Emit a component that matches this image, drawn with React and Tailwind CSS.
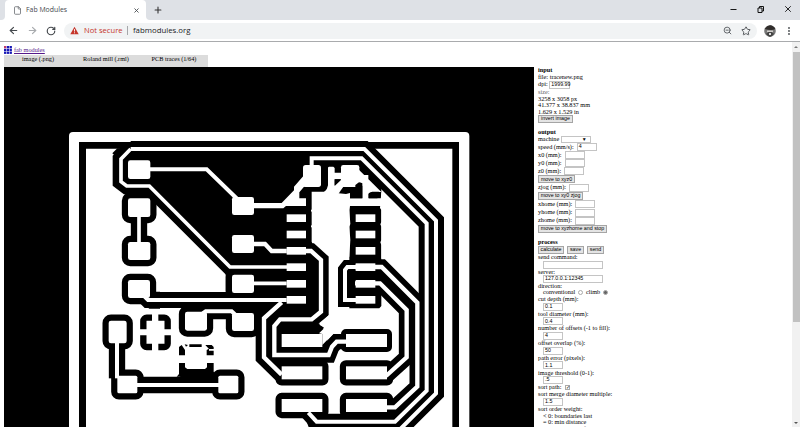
import React from "react";
import { ArrowLeft, ArrowRight, RotateCw, Star, ZoomOut, File, X, Plus, Minus } from "lucide-react";

// Traces: [origin x, origin y, path, copper width, clearance width]
const traces = [
  [540, 0, "M-328 87H373L588 302V820L440 968", 12, 48],
  [540, 0, "M215 145V115H365L560 310V812L465 905H230L205 878", 12, 48],
  [540, 0, "M345 441H425L532 548V800L465 862H435", 13, 47],
  [540, 0, "M345 490H420L500 570V712L438 768", 13, 47],
  [540, 0, "M345 441H322L315 450V540H350", 12, 42],
  [540, 0, "M140 393H213L243 420V575L215 598H120L103 618V705H266L276 680L290 665H322", 13, 46],
  [540, 0, "M-292 524L-276 540H140", 12, 48],
  [540, 0, "M125 547L72 595V712L125 764", 13, 50],
  [0, 0, "M212 87L183 117V185L200 198H268L510 441H690", 11, 50],
  [540, 0, "M30 490H140", 11, 40],
  [540, 0, "M40 372H75L95 393H140", 13, 40],
  [0, 0, "M265 148H440L535 240", 12, 40],
  [0, 0, "M237 285V370", 11, 49],
  [0, 450, "M171 215V325", 12, 49],
  [0, 450, "M225 345H480", 12, 50],
  [0, 450, "M428 130L437 124H515L530 138", 12, 48],
];

// Pads: [x, y, width, height, corner radius]
const pads = [
  [204, 121, 67, 56, 7], [204, 235, 67, 56, 7], [204, 366, 67, 54, 7],
  [516, 231, 66, 54, 7], [516, 345, 66, 54, 7],
  [204, 480, 66, 54, 7], [516, 464, 66, 55, 7],
  [375, 575, 66, 57, 7], [516, 579, 66, 54, 7],
  [146, 602, 54, 68, 7], [172, 767, 60, 53, 5], [475, 767, 60, 53, 5],
  [665, 642, 122, 39, 0], [858, 642, 123, 39, 0],
  [665, 739, 122, 39, 0], [858, 739, 123, 39, 0],
  [665, 837, 122, 39, 0], [858, 837, 123, 39, 0],
];

const pinRows = [283, 332, 381, 430, 480, 528];

function Board() {
  return (
    <svg className="block h-[360px] w-[530px] shrink-0" viewBox="4 67 530 360">
      <rect x="4" y="67" width="530" height="360" fill="#000" />
      <g transform="translate(60 120) scale(.333333)">
        <rect x="27" y="36" width="1201" height="1000" rx="12" fill="#fff" />
        <path d="M57 1000V66H1197V1000H1177V86H78V1000Z" fill="#000" />
        <g fill="none" stroke="#000">
          {traces.map(([x, y, d, , w], i) => (
            <path key={i} d={d} transform={`translate(${x} ${y})`} strokeWidth={w} />
          ))}
        </g>
        <g stroke="#000" strokeWidth="38" strokeLinejoin="round">
          {pads.map(([x, y, w, h, r], i) => (
            <rect key={i} x={x} y={y} width={w} height={h} rx={r} strokeWidth={x > 600 && y < 700 ? 30 : 37} />
          ))}
        </g>
        {/* filled clearance areas */}
        <g fill="#000">
          <path d="M212 87H910L964 206V558L958 565H868V215H755V365L780 420V575L757 598H660L625 600L610 585H497V430L268 198H190V117Z" />
          <path d="M663 547L738 540L780 540L780 577L755 600H660L612 610Z" />
          <path d="M582 550H640L615 590L600 640H582Z" />
          <path d="M658 610H777L792 623L777 642H650Z" />
          <path d="M375 753H450L476 772V800H360V770Z" />
          <path d="M187 715L190 752H238L250 765V775H180L151 770L147 700Z" />
          <path d="M740 905H1015L1100 860L1030 960H760Z" />
          <path d="M157 100L172 85H230L190 130Z" />
          <path d="M250 515H300V566H268L250 552Z" />
        </g>
        {/* ground pour between the pin columns */}
        <g transform="translate(540 0)" fill="#fff">
          <path d="M216 365V225Q216 221 222 221H238Q260 218 264 196V144Q264 140 268 140H280L284 144V158H303V178H284V198L303 180H325L296 220H312L322 215L330 218V258L328 270L331 312L328 320L331 360L328 410L300 425L285 440H275L266 400L240 378L222 366Z" />
          <path d="M213 268L218 272L213 276ZM213 315L218 319L213 323Z" />
          <path d="M330 235H424V258H330ZM367 165H385V240H367ZM355 148L378 170L424 216H395L385 221L367 190L355 185Z" />
          <path d="M424 216L436 228V414L424 416V375L421 367L424 360V320L421 313L424 306V270L420 264Z" />
          <rect x="303" y="135" width="55" height="66" rx="7" />
          <rect x="189" y="135" width="54" height="66" rx="8" />
          <path d="M40 249H125L162 211V200L192 166L205 200H192L178 217V235H198V258H138L130 265H40Z" />
          <path d="M237 640L254 623L238 614L272 580H290L302 629L284 637L247 675V642Z" />
        </g>
        <g fill="#000">
          <path d="M836 220L852 204H886V195L897 187L907 198V235H870V219L858 222Z" />
          <path d="M927 235V219L937 215H956L963 220L952 235Z" />
          <path d="M824 178H842L824 196Z" />
        </g>
        {/* isolated pads split by thermal gaps */}
        <rect x="250" y="593" width="73" height="88" rx="10" fill="none" stroke="#000" strokeWidth="19" />
        <path d="M276 575H295V700H276ZM235 628H340V646H235Z" fill="#fff" />
        <path d="M357 681L365 675L375 690V706H357ZM374 673L384 675L378 680ZM388 673H425V681H388ZM436 675H455L461 681V687H447ZM440 690L447 686V692H461V706H440ZM357 729H375V742L382 747H435L441 742V729H461V755L470 770H350L357 762Z" fill="#000" />
        <g fill="none" stroke="#fff">
          {traces.map(([x, y, d, w], i) => (
            <path key={i} d={d} transform={`translate(${x} ${y})`} strokeWidth={w} />
          ))}
        </g>
        <g fill="#fff">
          {pads.map(([x, y, w, h, r], i) => (
            <rect key={i} x={x} y={y} width={w} height={h} rx={r} />
          ))}
          {pinRows.map((y) => (
            <g key={y}>
              <rect x="680" y={y} width="58" height="23" />
              <rect x="887" y={y} width="59" height="23" />
            </g>
          ))}
        </g>
      </g>
    </svg>
  );
}

function Row({ h = "h-[7px]", children, indent, bold }) {
  return (
    <div className={`flex shrink-0 items-center whitespace-pre ${h} ${indent ? "pl-[5px]" : ""} ${bold ? "font-bold" : ""}`}>
      {children}
    </div>
  );
}

function Button({ w, children }) {
  return (
    <span className={`flex h-[8px] items-center justify-center border border-[#a5a5a5] bg-[#e4e4e4] font-['Liberation_Sans',sans-serif] text-[5.3px] leading-none ${w}`}>
      {children}
    </span>
  );
}

function Field({ w = "w-[20px]", children }) {
  return (
    <span className={`flex h-[8px] items-center border border-[#c4c4c4] bg-white pl-px font-['Liberation_Sans',sans-serif] text-[5.3px] leading-none ${w}`}>
      {children}
    </span>
  );
}

function Controls() {
  return (
    <div className="flex w-[120px] flex-col pl-1 font-['Liberation_Serif',serif] text-[6.27px] leading-none text-black">
      <Row bold>input</Row>
      <Row>file: tracenew.png</Row>
      <Row>dpi: <Field w="w-[21px]">1999.99</Field></Row>
      <Row h="h-[7.5px]"><span className="text-[#666]">size:</span></Row>
      <Row h="h-[6.5px]">3258 x 3058 px</Row>
      <Row h="h-[6.5px]">41.377 x 38.837 mm</Row>
      <Row h="h-[6.5px]">1.629 x 1.529 in</Row>
      <Row h="h-[8px]"><Button w="w-[35px]">invert image</Button></Row>
      <Row h="h-[6px]" />
      <Row bold>output</Row>
      <Row>machine <span className="flex h-[7px] w-[30px] items-center justify-end border border-[#c4c4c4] pr-[3px] text-[5px]">▼</span></Row>
      <Row h="h-[7.5px]">speed (mm/s):  <Field>4</Field></Row>
      <Row h="h-[8.5px]">x0 (mm):  <Field /></Row>
      <Row h="h-[8px]">y0 (mm):  <Field /></Row>
      <Row h="h-[8px]">z0 (mm):  <Field /></Row>
      <Row h="h-[8.5px]"><Button w="w-[37px]">move to xyz0</Button></Row>
      <Row h="h-[8px]">zjog (mm):  <Field /></Row>
      <Row h="h-[8.5px]"><Button w="w-[45px]">move to xy0 zjog</Button></Row>
      <Row h="h-[8.5px]">xhome (mm):  <Field /></Row>
      <Row h="h-[8px]">yhome (mm):  <Field /></Row>
      <Row h="h-[8px]">zhome (mm):  <Field /></Row>
      <Row h="h-[8px]"><Button w="w-[69px]">move to xyzhome and stop</Button></Row>
      <Row h="h-[6px]" />
      <Row bold>process</Row>
      <Row h="h-[8px]">
        <div className="flex gap-[3px]">
          <Button w="w-[26px]">calculate</Button>
          <Button w="w-[17px]">save</Button>
          <Button w="w-[17px]">send</Button>
        </div>
      </Row>
      <Row>send command:</Row>
      <Row h="h-[8px]" indent><Field w="w-[60px]" /></Row>
      <Row h="h-[6.5px]">server:</Row>
      <Row h="h-[7.5px]" indent><Field w="w-[60px]">127.0.0.1:12345</Field></Row>
      <Row h="h-[6.5px]">direction:</Row>
      <Row indent>
        conventional
        <span className="mx-[3px] size-[4.5px] rounded-full border border-[#aaa]" />
        climb
        <span className="ml-[3px] size-[4.5px] rounded-full border border-[#aaa] bg-[#666]" />
      </Row>
      <Row h="h-[6.5px]">cut depth (mm):</Row>
      <Row h="h-[8.2px]" indent><Field>0.1</Field></Row>
      <Row h="h-[6.5px]">tool diameter (mm):</Row>
      <Row h="h-[8.2px]" indent><Field>0.4</Field></Row>
      <Row h="h-[6.5px]">number of offsets (-1 to fill):</Row>
      <Row h="h-[8.2px]" indent><Field>4</Field></Row>
      <Row h="h-[6.5px]">offset overlap (%):</Row>
      <Row h="h-[8.2px]" indent><Field>50</Field></Row>
      <Row h="h-[6.5px]">path error (pixels):</Row>
      <Row h="h-[8.2px]" indent><Field>1.1</Field></Row>
      <Row h="h-[6.5px]">image threshold (0-1):</Row>
      <Row h="h-[8px]" indent><Field>.5</Field></Row>
      <Row>
        sort path:{" "}
        <span className="ml-[2px] flex size-[5px] items-center justify-center border border-[#aaa] text-[5px]">✓</span>
      </Row>
      <Row>sort merge diameter multiple:</Row>
      <Row h="h-[8px]" indent><Field>1.5</Field></Row>
      <Row h="h-[6.5px]">sort order weight:</Row>
      <Row h="h-[6.5px]" indent>{"< 0: boundaries last"}</Row>
      <Row indent>= 0: min distance</Row>
      <Row h="h-[6.5px]" indent>{"> 0: boundaries first"}</Row>
    </div>
  );
}

function BrowserBar() {
  return (
    <header className="h-[42px] shrink-0 border-b border-[#a9abad] bg-white font-['Open_Sans',sans-serif]">
      <div className="flex h-5 items-start bg-[#dee1e6]">
        <div className="flex h-5 w-[5px] bg-white"><div className="h-5 w-[5px] rounded-br-[4px] bg-[#dee1e6]" /></div>
        <div className="flex h-5 w-[141px] items-center rounded-t-[4px] bg-white pr-[6px] pl-2">
          <File className="size-[9px] text-[#5f6368]" strokeWidth={2} />
          <span className="ml-1 flex-1 text-[6.9px] text-[#45494d]">Fab Modules</span>
          <X className="size-[7px] text-[#45494d]" strokeWidth={3} />
        </div>
        <div className="flex h-5 w-[5px] bg-white"><div className="h-5 w-[5px] rounded-bl-[4px] bg-[#dee1e6]" /></div>
        <Plus className="mt-[5px] ml-[2px] size-[10px] text-[#333]" strokeWidth={2.6} />
        <div className="ml-auto flex items-center gap-[18px] pt-1 pr-[7px]">
          <Minus className="size-[9px] text-black" strokeWidth={2.4} />
          <svg className="size-[9px]" viewBox="0 0 9 9" fill="none" stroke="#111" strokeWidth="1">
            <path d="M2 3h4v4.5H2zM3.5 3V1.5h4V6H6" />
          </svg>
          <X className="size-[10px] text-black" strokeWidth={2} />
        </div>
      </div>
      <div className="flex h-[21px] items-center pl-2">
        <ArrowLeft className="size-[11px] text-[#45494d]" strokeWidth={2.5} />
        <ArrowRight className="ml-[8px] size-[11px] text-[#a8abae]" strokeWidth={2.5} />
        <RotateCw className="ml-[8px] size-[10px] text-[#45494d]" strokeWidth={2.8} />
        <div className="ml-[8px] flex h-4 w-[693px] items-center rounded-full bg-[#f1f3f4] pr-[6px] pl-[6px]">
          <svg className="size-[9px]" viewBox="0 0 9 9">
            <path d="M4.5.7L8.7 8.2H.3z" fill="#c5352b" />
            <path d="M4.5 3.1v2.4M4.5 6.3v1" stroke="#fff" strokeWidth=".9" />
          </svg>
          <span className="ml-[5px] w-[40px] whitespace-nowrap text-[7.6px] text-[#c5352b]">Not secure</span>
          <span className="ml-[3px] h-[9px] w-px bg-[#a5a7aa]" />
          <span className="ml-[5px] flex-1 text-[7.8px] text-[#202124]">fabmodules.org</span>
          <ZoomOut className="size-[9px] text-[#55595d]" strokeWidth={2.4} />
          <Star className="ml-[9px] size-[10px] text-[#55595d]" strokeWidth={2.4} />
        </div>
        <svg className="ml-[7px] size-[12px]" viewBox="0 0 12 12">
          <circle cx="6" cy="6" r="5.8" fill="#777" />
          <path d="M.6 4Q3 .5 6 .3T11.4 4Q8 6 .6 4" fill="#302d2b" />
          <path d="M3 5.5h6v2H3z" fill="#d1cecb" />
          <path d="M2 9l2-2h4l2 2-3 2.8H5z" fill="#444" />
          <path d="M5 8h2v2H5z" fill="#ddd" />
        </svg>
        <svg className="ml-[10px] h-[10px] w-[6px]" viewBox="0 0 6 10" fill="#45494d">
          <circle cx="3" cy="2" r=".9" /><circle cx="3" cy="5" r=".9" /><circle cx="3" cy="8" r=".9" />
        </svg>
      </div>
    </header>
  );
}

export default function App() {
  return (
    <div className="flex h-[427px] w-[800px] flex-col overflow-hidden bg-white">
      <BrowserBar />
      <div className="flex min-h-0 flex-1">
        <main className="flex min-w-0 flex-1 flex-col overflow-hidden pt-[3px] pl-1">
          <div className="flex h-[10px] shrink-0 items-center gap-[2px]">
            <svg className="size-[8px]" viewBox="0 0 8 8">
              {[0, 1, 2].map((r) => [0, 1, 2].map((c) => (
                <rect key={`${r}${c}`} x={c * 2.8} y={r * 2.8} width="2.3" height="2.3" fill={r === 0 && c === 0 ? "#c23a6a" : "#1717b5"} />
              )))}
            </svg>
            <span className="font-['Liberation_Serif',serif] text-[6.27px] leading-none text-[#551a8b] underline">fab modules</span>
          </div>
          <nav className="grid h-[12px] w-[204px] shrink-0 grid-cols-3 bg-[#dcdcdc] text-center font-['Liberation_Serif',serif] text-[6.27px] leading-[7px] text-black">
            <span>image (.png)</span>
            <span>Roland mill (.rml)</span>
            <span>PCB traces (1/64)</span>
          </nav>
          <div className="flex min-h-0 flex-1">
            <Board />
            <Controls />
          </div>
        </main>
        <div className="flex w-2 flex-col items-center bg-[#f1f1f1]">
          <span className="mt-[4px] mb-[4px] size-0 border-x-[2px] border-b-[2px] border-x-transparent border-b-[#777]" />
          <div className="h-[270px] w-[7px] bg-[#c1c1c1]" />
          <span className="mt-auto mb-[3px] size-0 border-x-[2px] border-t-[2px] border-x-transparent border-t-[#555]" />
        </div>
      </div>
    </div>
  );
}
